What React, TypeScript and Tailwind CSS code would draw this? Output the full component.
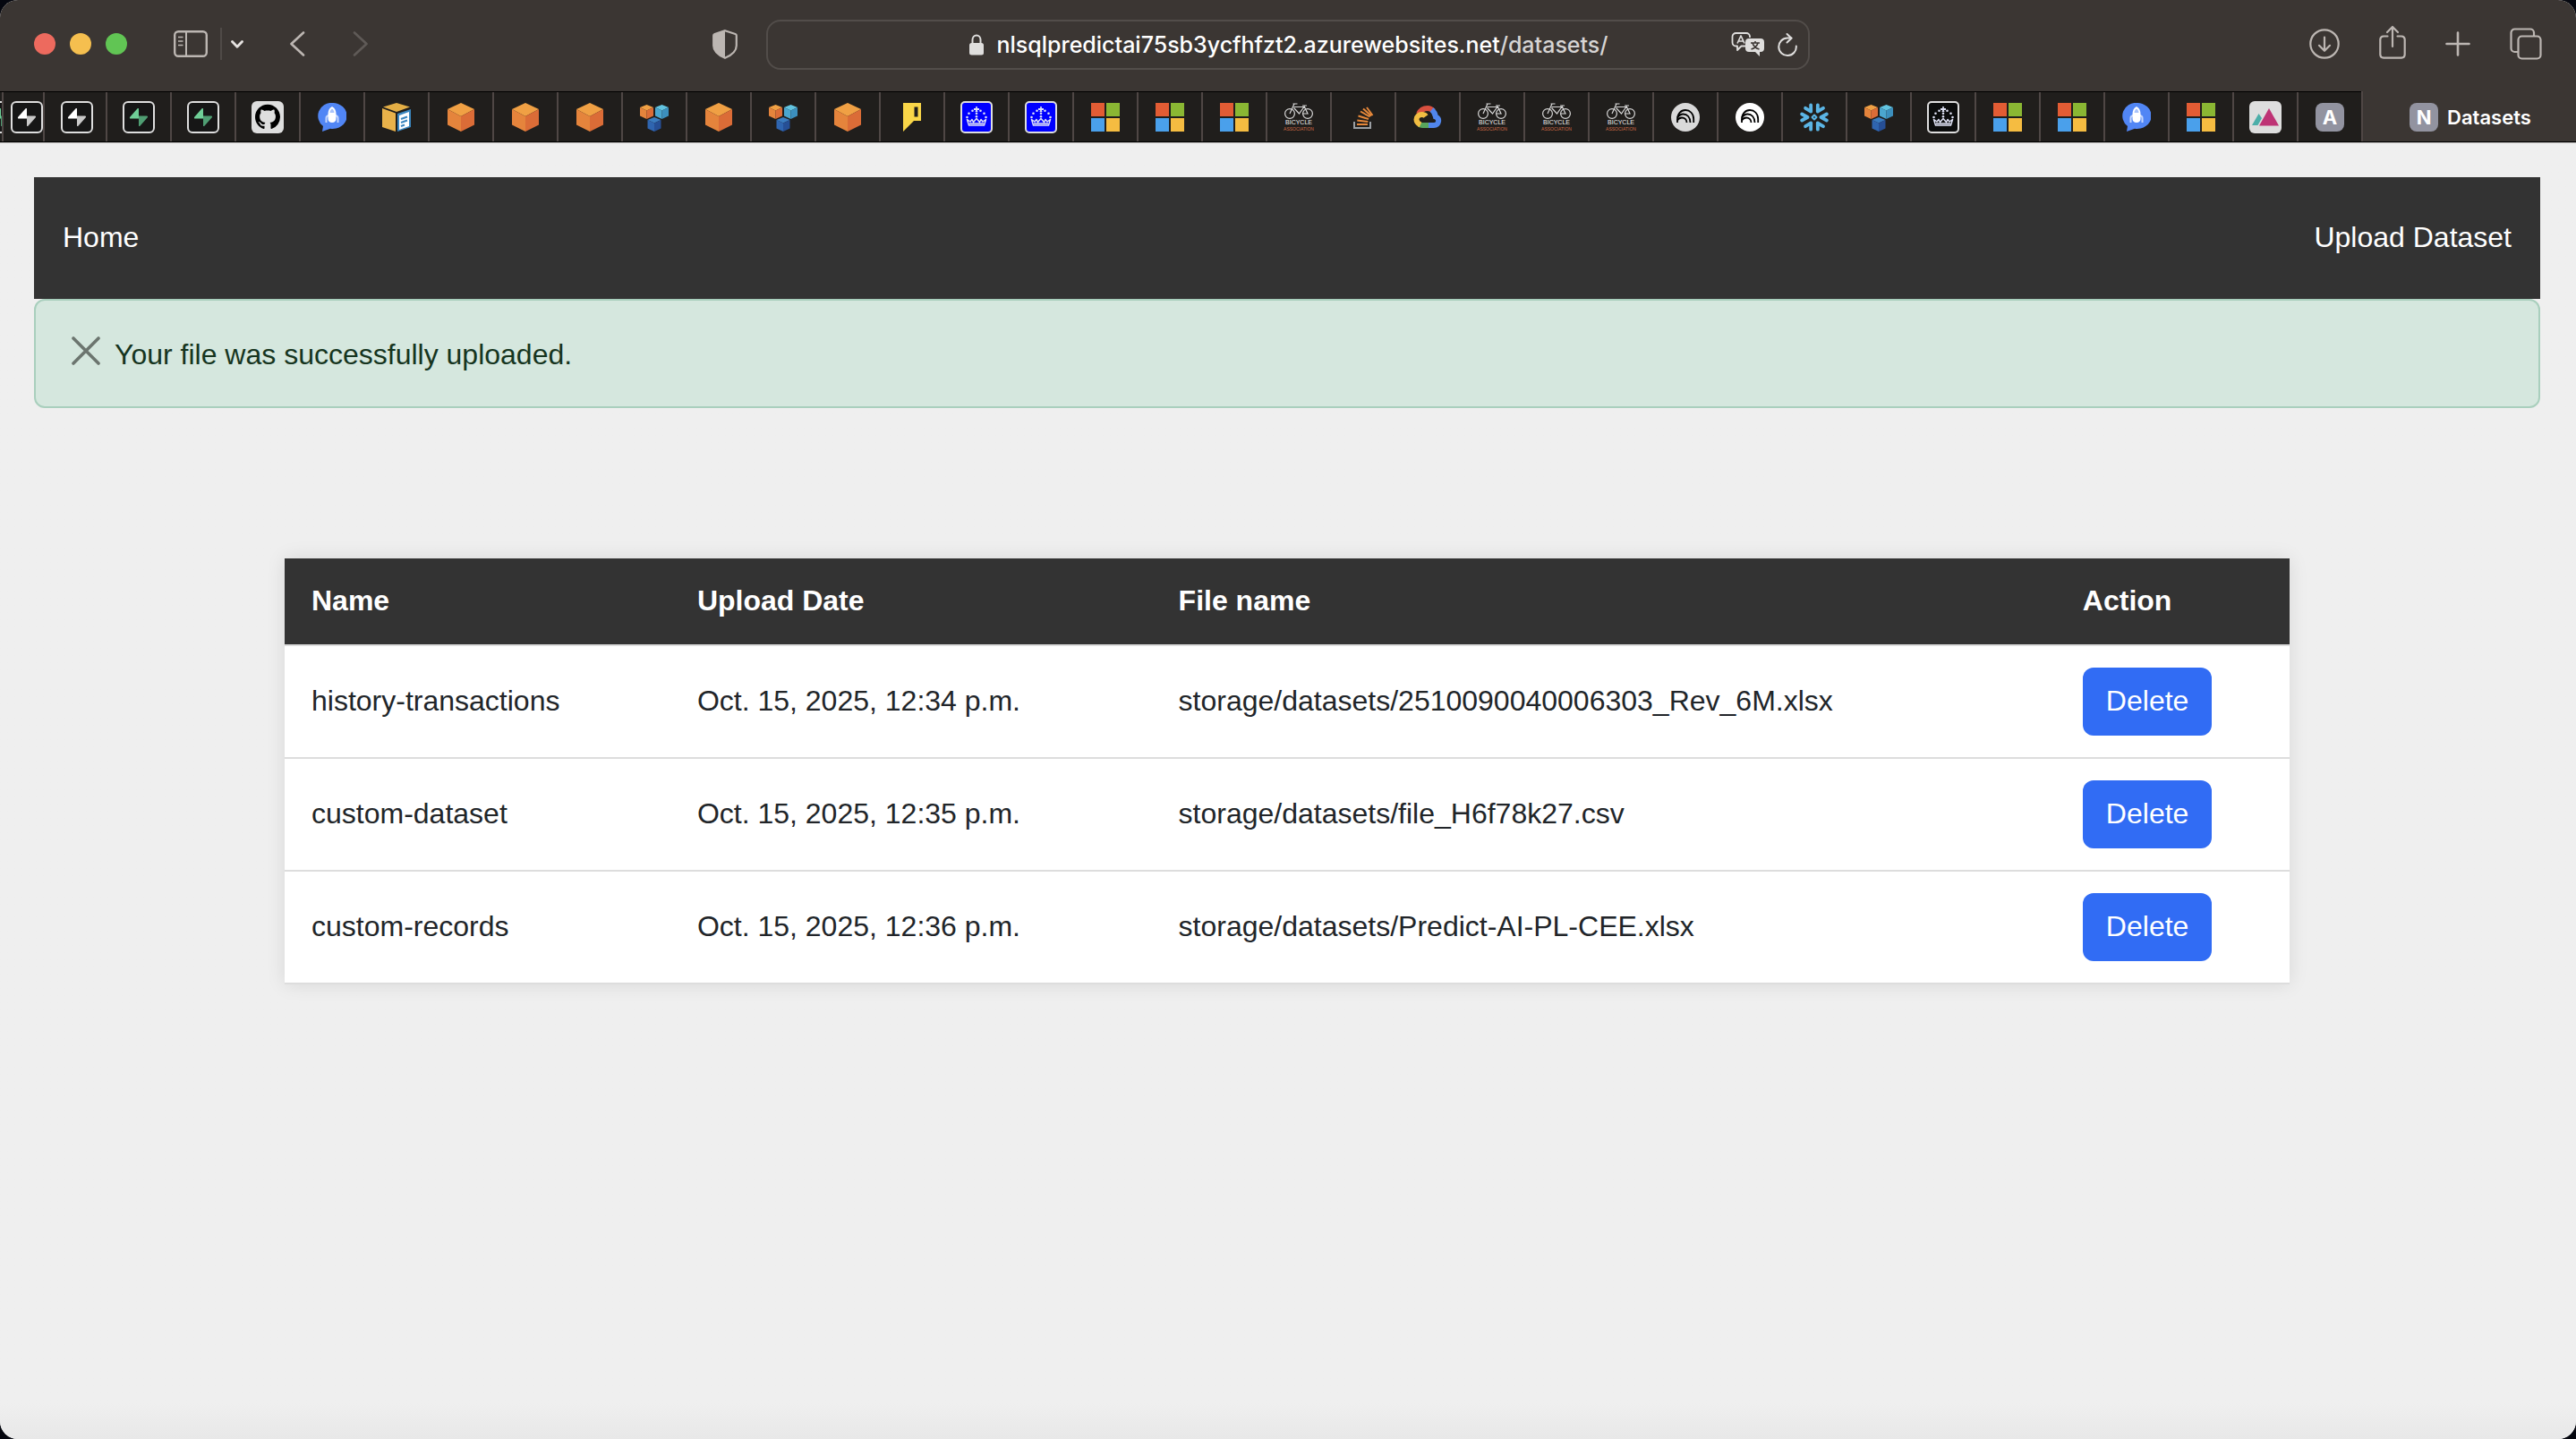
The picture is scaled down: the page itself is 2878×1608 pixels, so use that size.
import React from "react";

type P = { children?: React.ReactNode };

function Bolt({ top, bottom }: { top: string; bottom: string }) {
  return (
    <svg viewBox="0 0 36 36" className="size-9 shrink-0">
      <rect x="1" y="1" width="34" height="34" rx="5" fill="#161616" stroke="#dedede" strokeWidth="2" />
      <path d="M18 8.500v11H9c-1 0-1.400-1-.8-1.800L16.600 8.300c.5-.6 1.400-.4 1.400.200z" fill={top} />
      <path d="M18 27.500v-11h9c1 0 1.400 1 .8 1.800l-8.400 9.400c-.5.6-1.400.4-1.400-.200z" fill={bottom} />
    </svg>
  );
}
const GreenBolt = () => <Bolt top="#6fcf97" bottom="#4f9e73" />;
const WhiteBolt = () => <Bolt top="#ffffff" bottom="#c9c9c9" />;

function GitHub() {
  return (
    <svg viewBox="0 0 36 36" className="size-9">
      <rect width="36" height="36" rx="6" fill="#dedede" />
      <g transform="translate(4 3.700) scale(1.750)">
        <path
          fill="#000"
          d="M8 0C3.580 0 0 3.580 0 8c0 3.540 2.290 6.530 5.470 7.590.4.070.55-.17.55-.38 0-.19-.01-.82-.01-1.490-2.010.37-2.530-.49-2.690-.94-.09-.23-.48-.94-.82-1.130-.28-.15-.68-.52-.01-.53.63-.01 1.080.58 1.230.82.72 1.210 1.870.87 2.330.66.07-.52.28-.87.51-1.070-1.780-.2-3.640-.89-3.640-3.950 0-.87.31-1.590.82-2.150-.08-.2-.36-1.020.08-2.120 0 0 .67-.21 2.200.82.64-.18 1.320-.27 2-.27s1.360.09 2 .27c1.530-1.040 2.200-.82 2.200-.82.44 1.100.16 1.920.08 2.120.51.56.82 1.270.82 2.150 0 3.070-1.870 3.750-3.650 3.950.29.25.54.73.54 1.480 0 1.070-.01 1.930-.01 2.200 0 .21.15.46.55.38A8.010 8.010 0 0 0 16 8c0-4.420-3.580-8-8-8z"
        />
      </g>
    </svg>
  );
}

function Rocket() {
  return (
    <svg viewBox="0 0 32 32" className="size-8">
      <path d="M16 0a16 14.500 0 1 1-2 28.800L5 32l1-6A14.500 14.500 0 0 1 16 0z" fill="#5186f5" />
      <path d="M9.500 22v-5c0-1.500 1-2.500 2.500-3M22.500 22v-5c0-1.500-1-2.500-2.500-3" fill="none" stroke="#c5d6fb" strokeWidth="2" />
      <path d="M16 4c3 1.500 4.500 4.500 4.500 8.500V18c0 2-1.500 4-4.500 4s-4.500-2-4.500-4v-5.500c0-4 1.500-7 4.500-8.500z" fill="#fff" />
      <path d="M16 6.500c1.500 1 2.300 2.500 2.500 4.500h-5c.2-2 1-3.500 2.500-4.500z" fill="#a9c3fa" />
    </svg>
  );
}

function BoxDoc() {
  return (
    <svg viewBox="0 0 32 32" className="size-8">
      <path d="M16 0l15 4.500L16 10 1 4.500z" fill="#e3ae45" />
      <path d="M0 6l15 5.500V32L0 27z" fill="#e9b24a" />
      <path d="M17 12l15-5v20l-15 5z" fill="#3a86bf" />
      <path d="M19 14l11-4v16l-11 4z" fill="#fff" />
      <path d="M21 18l7-2.500M21 22l7-2.500M21 26l4-1.500" stroke="#3a86bf" strokeWidth="2" />
    </svg>
  );
}

function Cube() {
  return (
    <svg viewBox="0 0 32 32" className="size-8">
      <path d="M16 0l15 7-15 8L1 7z" fill="#f0a044" />
      <path d="M1 7l15 8v17L1 24.500z" fill="#e5843c" />
      <path d="M31 7l-15 8v17l15-7.500z" fill="#db6c37" />
    </svg>
  );
}

function MiniCube({ x, y, a, b, c }: { x: number; y: number; a: string; b: string; c: string }) {
  return (
    <g transform={`translate(${x} ${y})`}>
      <path d="M7.500 0l7.500 3-7.500 3.500L0 3z" fill={a} />
      <path d="M0 3l7.500 3.500V16L0 12.500z" fill={b} />
      <path d="M15 3L7.500 6.500V16l7.500-3.500z" fill={c} />
    </g>
  );
}
function Cubes() {
  return (
    <svg viewBox="0 0 32 32" className="size-8">
      <MiniCube x={0} y={2} a="#f0a044" b="#e5843c" c="#db6c37" />
      <MiniCube x={17} y={2} a="#62c4e0" b="#4ba6cf" c="#3c8fbd" />
      <MiniCube x={8.5} y={16} a="#3a7cc0" b="#2f65b0" c="#264f96" />
    </svg>
  );
}

function Flag() {
  return (
    <svg viewBox="0 0 32 32" className="size-8">
      <path d="M6 0h20v20h-8L6 32z" fill="#f9d648" />
      <rect x="18.500" y="4.500" width="4" height="11" fill="#201e1c" />
    </svg>
  );
}

function Crown({ bg }: { bg: string }) {
  const dots = [
    [13.5, 10.7], [22.5, 10.7], [9.5, 13.7], [26.5, 13.7], [7.5, 18], [28.5, 18], [18, 13.7], [18, 17.2],
  ];
  return (
    <svg viewBox="0 0 36 36" className="size-9">
      <rect x="1" y="1" width="34" height="34" rx="4" fill={bg} stroke="#dedede" strokeWidth="2" />
      <g fill="#dfe2f5">
        {dots.map(([x, y]) => (
          <circle key={`${x}-${y}`} cx={x} cy={y} r="1.300" />
        ))}
        <path d="M17.200 6h1.600v2H21v2h-2.200l.7 2h-3l.7-2H15V8h2.200z" />
      </g>
      <path
        d="M7.500 20.500L9.500 27h17l2-6.500-3.500 2.500-2-2.500-1.500 3-3.500-4-3.500 4-1.500-3-2 2.500zM10 25h16"
        fill="none"
        stroke="#dfe2f5"
        strokeWidth="1.500"
        strokeLinejoin="round"
      />
    </svg>
  );
}
const BlueCrown = () => <Crown bg="#0000ff" />;
const BlackCrown = () => <Crown bg="#0b0c0c" />;

function Microsoft() {
  return (
    <svg viewBox="0 0 32 32" className="size-8">
      <rect width="15" height="15" fill="#e25c34" />
      <rect x="17" width="15" height="15" fill="#8ab733" />
      <rect y="17" width="15" height="15" fill="#4aa0eb" />
      <rect x="17" y="17" width="15" height="15" fill="#f5bc41" />
    </svg>
  );
}

function Bicycle() {
  return (
    <span className="flex w-10 flex-col items-center font-['Liberation_Sans',Arial,sans-serif]">
      <svg viewBox="0 0 32 18" className="h-[18px] w-8" fill="none" stroke="#d6d6d6" strokeWidth="1.200">
        <circle cx="6" cy="12" r="5.400" />
        <circle cx="26" cy="12" r="5.400" />
        <path d="M6 12L11 1M9.500 1h5M10.500 4.500h11M10.500 5.500l6 6.500 6-8.500M20 3h5M22 3.500l4 8.500h-6" />
      </svg>
      <span className="text-[7px] leading-[8px] text-[#f0f0f0]">BICYCLE</span>
      <span className="text-[5px] leading-[6px] text-[#cf6a45]">ASSOCIATION</span>
    </span>
  );
}

function StackOverflow() {
  return (
    <svg viewBox="0 0 32 32" className="size-8">
      <path d="M6 21v7h18v-7" fill="none" stroke="#9b9fa3" strokeWidth="2" />
      <path d="M9 24h12M9.300 19.500l12 1.500M10.500 14.500l11.500 3.500M13 9.500l10.500 6M16 6.500l9 8M20 5l6.500 9" stroke="#e6883a" strokeWidth="2" />
    </svg>
  );
}

function GoogleCloud() {
  return (
    <svg viewBox="0 0 32 32" className="size-8" fill="none" strokeWidth="6">
      <path d="M6 12.500C8 8 12 6 16 6c3 0 5 1.500 6.500 3" stroke="#d9503f" />
      <path d="M20.500 7.500c3 2.500 4 5 4.500 8 2.500 1 3.500 3 3 5.500-.500 2.500-2.500 4-5 4h-7" stroke="#5186ec" />
      <path d="M17 25h-7c-1.500 0-2.500-.400-3.500-1" stroke="#58a55c" />
      <path d="M8 24.500C5 23 3.500 21 3.500 18.500c0-3.500 3-5.500 6-5.500 2 0 3.500.500 4.500 2" stroke="#f1bd42" />
    </svg>
  );
}

function Arcs({ bg }: { bg: string }) {
  return (
    <svg viewBox="0 0 32 32" className="size-8">
      <circle cx="16" cy="16" r="16" fill={bg} />
      <g fill="none" stroke="#000" strokeWidth="1.800">
        <path d="M7 22v-3.500C7 12 11 8 16 8s9.200 4 9.200 10V22" />
        <path d="M7 16.500c2-3 4-4 6.500-4 4.500 0 8 3.500 8 9.500" />
        <path d="M7 19.500c1.500-2.500 3-3 5-3 3 0 5.500 2 5.500 5.500" />
      </g>
    </svg>
  );
}
const GrayArcs = () => <Arcs bg="#d9d9d9" />;
const WhiteArcs = () => <Arcs bg="#ffffff" />;

function Snowflake() {
  return (
    <svg viewBox="0 0 32 32" className="size-8" fill="none" stroke="#5bb5e5" strokeWidth="3.800" strokeLinecap="round" strokeLinejoin="round">
      {[0, 60, 120, 180, 240, 300].map((r) => (
        <path key={r} d="M2.200 12.500L8.500 16l-6.300 3.500" transform={`rotate(${r} 16 16)`} />
      ))}
      <path d="M16 13.500l2.500 2.500-2.500 2.500-2.500-2.500z" strokeWidth="2" />
    </svg>
  );
}

function Mountains() {
  return (
    <svg viewBox="0 0 36 36" className="size-9">
      <rect width="36" height="36" rx="6" fill="#dedede" />
      <path d="M3 27l7.500-13 3.500 5-4.500 8z" fill="#4caea9" />
      <path d="M11 27.500L22 8l11 19.500z" fill="#be3375" />
    </svg>
  );
}

function Letter({ children }: P) {
  return (
    <span className="flex size-8 items-center justify-center rounded-lg bg-[#9293a0] text-[22px] leading-8 font-bold text-white">
      {children}
    </span>
  );
}
const LetterA = () => <Letter>A</Letter>;

const tabs: [string, React.ComponentType][] = [
  ["Supabase", GreenBolt], ["Supabase", GreenBolt], ["GitHub", GitHub], ["Launch", Rocket], ["Storage", BoxDoc],
  ["Instance", Cube], ["Instance", Cube], ["Instance", Cube], ["Services", Cubes], ["Instance", Cube],
  ["Services", Cubes], ["Instance", Cube], ["Notes", Flag], ["Gov", BlueCrown], ["Gov", BlueCrown],
  ["Microsoft", Microsoft], ["Microsoft", Microsoft], ["Microsoft", Microsoft], ["Bicycle Association", Bicycle],
  ["Stack Overflow", StackOverflow], ["Google Cloud", GoogleCloud], ["Bicycle Association", Bicycle],
  ["Bicycle Association", Bicycle], ["Bicycle Association", Bicycle], ["Arcs", GrayArcs], ["Arcs", WhiteArcs],
  ["Snowflake", Snowflake], ["Services", Cubes], ["Gov", BlackCrown], ["Microsoft", Microsoft],
  ["Microsoft", Microsoft], ["Launch", Rocket], ["Microsoft", Microsoft], ["Mountains", Mountains], ["A", LetterA],
];

function Toolbar() {
  return (
    <header className="flex h-[102px] items-start bg-[#3b3633] text-[#bcb6b2]">
      <div className="flex h-[98px] flex-1 items-center justify-between pr-8 pl-[38px]">
        <div className="flex items-center">
          <div className="flex gap-4">
            <button aria-label="Close" className="size-6 rounded-full bg-[#ed6a5e]" />
            <button aria-label="Minimize" className="size-6 rounded-full bg-[#f5bf4f]" />
            <button aria-label="Zoom" className="size-6 rounded-full bg-[#61c554]" />
          </div>
          <button aria-label="Sidebar" className="ml-[52px]">
            <svg viewBox="0 0 38 30" className="h-[30px] w-[38px]" fill="none" stroke="currentColor" strokeWidth="2.400">
              <rect x="1.200" y="1.200" width="35.600" height="27.600" rx="4" />
              <path d="M14 1v28" strokeWidth="2" />
              <path d="M5 7.500h5.500M5 12h5.500M5 16.500h5.500" strokeWidth="1.400" />
            </svg>
          </button>
          <span className="ml-3.5 h-9 w-0.5 bg-[#4f4a47]" />
          <button aria-label="Tab groups" className="ml-2.5 text-[#e6e3e1]">
            <svg viewBox="0 0 14 9" className="h-[9px] w-[14px]" fill="none" stroke="currentColor" strokeWidth="2.800" strokeLinecap="round" strokeLinejoin="round">
              <path d="M1.500 1.500L7 7.200l5.500-5.700" />
            </svg>
          </button>
          <button aria-label="Back" className="ml-[51px]">
            <svg viewBox="0 0 18 28" className="h-7 w-[18px]" fill="none" stroke="currentColor" strokeWidth="2.600" strokeLinecap="round" strokeLinejoin="round">
              <path d="M16 1.500L2.500 14 16 26.500" />
            </svg>
          </button>
          <button aria-label="Forward" className="ml-[53px] text-[#5f5a57]">
            <svg viewBox="0 0 18 28" className="h-7 w-[18px]" fill="none" stroke="currentColor" strokeWidth="2.600" strokeLinecap="round" strokeLinejoin="round">
              <path d="M2 1.500L15.500 14 2 26.500" />
            </svg>
          </button>
        </div>
        <button aria-label="Privacy report">
          <svg viewBox="0 0 28 33" className="h-[33px] w-7">
            <path d="M14 1.200L25.500 5c.900.300 1.300.800 1.300 1.700V18c0 6.500-5 10.500-12.800 13.800C6.200 28.500 1.200 24.500 1.200 18V6.700c0-.9.400-1.400 1.300-1.700z" fill="none" stroke="currentColor" strokeWidth="2.200" />
            <path d="M14 1L2.500 5C1.500 5.300 1 6 1 7v11c0 6.500 5 10.500 13 14z" fill="currentColor" />
          </svg>
        </button>
      </div>
      <div className="mt-[22px] flex h-14 w-[1166px] items-center rounded-2xl border-2 border-[#524d4a] pr-3">
        <div className="flex flex-1 items-center justify-center gap-3.5 pl-[88px] text-[25px] leading-8 font-medium">
          <svg viewBox="0 0 16 24" className="h-6 w-4 text-[#dfdedd]">
            <path d="M3.500 11V6.500a4.500 5 0 0 1 9 0V11" fill="none" stroke="currentColor" strokeWidth="2" />
            <rect y="10" width="16" height="13.500" rx="2.500" fill="currentColor" />
          </svg>
          <span className="text-white">
            nlsqlpredictai75sb3ycfhfzt2.azurewebsites.net<span className="text-[#d6d4d3]">/datasets/</span>
          </span>
        </div>
        <button aria-label="Translate" className="text-[#dfdedd]">
          <svg viewBox="0 0 38 28" className="h-7 w-[38px]" fill="none" stroke="currentColor" strokeWidth="1.800" strokeLinejoin="round">
            <path d="M16 15.500h-4.500L7 20v-4.500H5.500A4 4 0 0 1 1.500 11.500V5A4 4 0 0 1 5.500 1H17a4 4 0 0 1 4 4v1" />
            <path d="M7 12.500L11 4l4 8.500M8.500 10h5" strokeWidth="1.700" />
            <path d="M20 7h13a4 4 0 0 1 4 4v7a4 4 0 0 1-4 4h-1v5l-5-5h-7a4 4 0 0 1-4-4v-7a4 4 0 0 1 4-4z" fill="currentColor" stroke="none" />
            <path d="M22 12h10M27 10v2M30 12c-1 3.500-4 6-7.500 7M24 12c1 3.500 4 6 7.500 7" stroke="#3b3633" strokeWidth="1.600" />
          </svg>
        </button>
        <button aria-label="Reload" className="ml-3.5 text-[#dfdedd]">
          <svg viewBox="0 0 22 28" className="h-7 w-[22px]" fill="none" stroke="currentColor" strokeWidth="2" strokeLinecap="round" strokeLinejoin="round">
            <path d="M20.800 15.500A9.800 9.800 0 1 1 11 6.500h4.500" />
            <path d="M10.500 2l5 4.700-5 4.800" />
          </svg>
        </button>
      </div>
      <div className="flex h-[98px] flex-1 items-center justify-end gap-11 pr-[38px] pl-8">
        <button aria-label="Downloads">
          <svg viewBox="0 0 34 34" className="size-[34px]" fill="none" stroke="currentColor" strokeWidth="2.200" strokeLinecap="round" strokeLinejoin="round">
            <circle cx="17" cy="17" r="15.700" />
            <path d="M17 9.500v15M11 18.800l6 6 6-6" />
          </svg>
        </button>
        <button aria-label="Share" className="-mt-1">
          <svg viewBox="0 0 30 38" className="h-[38px] w-[30px]" fill="none" stroke="currentColor" strokeWidth="2.200" strokeLinecap="round" strokeLinejoin="round">
            <path d="M9.500 12.500H5A3.800 3.800 0 0 0 1.300 16v17A3.800 3.800 0 0 0 5 36.600h20a3.800 3.800 0 0 0 3.700-3.600V16a3.800 3.800 0 0 0-3.700-3.500h-4.500M15 24V2M9 8l6-6 6 6" />
          </svg>
        </button>
        <button aria-label="New tab">
          <svg viewBox="0 0 28 28" className="size-7" fill="none" stroke="currentColor" strokeWidth="2.600" strokeLinecap="round">
            <path d="M14 1.500v25M1.500 14h25" />
          </svg>
        </button>
        <button aria-label="Tab overview">
          <svg viewBox="0 0 36 36" className="size-9" fill="none" stroke="currentColor" strokeWidth="2.200" strokeLinejoin="round">
            <rect x="9.500" y="9.500" width="25" height="25" rx="4" />
            <path d="M9 27H5.500a4 4 0 0 1-4-4V5.500a4 4 0 0 1 4-4H23a4 4 0 0 1 4 4V9" />
          </svg>
        </button>
      </div>
    </header>
  );
}

function TabBar() {
  const cell = "flex h-14 shrink-0 items-center border-t border-black bg-[#201e1c]";
  return (
    <nav aria-label="Tabs" className="flex h-[57px] overflow-hidden border-b border-black bg-[#3b3633]">
      <div className={`${cell} w-0.5 justify-center overflow-hidden`}>
        <GreenBolt />
      </div>
      <button aria-label="Supabase" className={`${cell} w-[46px] justify-end shadow-[inset_2px_0_0_#4f4745]`}>
        <WhiteBolt />
      </button>
      <button aria-label="Supabase" className={`${cell} w-[70px] justify-center pl-1.5 shadow-[inset_2px_0_0_#4f4745]`}>
        <WhiteBolt />
      </button>
      {tabs.map(([name, Icon], i) => (
        <button key={i} aria-label={name} className={`${cell} w-[72px] justify-center pl-0.5 shadow-[inset_2px_0_0_#4f4745]`}>
          <Icon />
        </button>
      ))}
      <button className="flex h-14 flex-1 items-center justify-center gap-2.5 pt-px pl-1 text-[22px] leading-8 font-semibold text-white shadow-[inset_2px_0_0_#4f4745]">
        <Letter>N</Letter>
        Datasets
      </button>
    </nav>
  );
}

const rows = [
  ["history-transactions", "Oct. 15, 2025, 12:34 p.m.", "storage/datasets/2510090040006303_Rev_6M.xlsx"],
  ["custom-dataset", "Oct. 15, 2025, 12:35 p.m.", "storage/datasets/file_H6f78k27.csv"],
  ["custom-records", "Oct. 15, 2025, 12:36 p.m.", "storage/datasets/Predict-AI-PL-CEE.xlsx"],
];

function Page() {
  return (
    <main className="flex-1 border-t border-[#b5b3b2] bg-linear-to-t from-[#e8e8e8] to-[#efefef] to-[40px] pt-[38px] pr-10 pl-[38px] font-['Liberation_Sans',Arial,sans-serif] text-[32px] leading-[48px] text-[#212529]">
      <nav className="flex items-center justify-between bg-[#333333] px-8 pt-[43px] pb-[45px] text-white">
        <a href="#home">Home</a>
        <a href="#upload">Upload Dataset</a>
      </nav>
      <div role="alert" className="flex items-start gap-2 rounded-xl border-2 border-[#a9cfbd] bg-[#d5e7de] px-8 pt-9 pb-[34px] text-[#16351f]">
        <button aria-label="Dismiss" className="px-2 pt-1 pb-2 text-[#6c756f]">
          <svg viewBox="0 0 32 32" className="size-8" fill="none" stroke="currentColor" strokeWidth="3.600" strokeLinecap="round">
            <path d="M2 2l28 28M30 2L2 30" />
          </svg>
        </button>
        <p>Your file was successfully uploaded.</p>
      </div>
      <table className="mx-auto mt-[168px] w-4/5 border-collapse bg-white text-left shadow-[0_0_20px_rgba(0,0,0,0.1)]">
        <thead className="bg-[#333333] text-white">
          <tr>
            {["Name", "Upload Date", "File name", "Action"].map((h) => (
              <th key={h} scope="col" className="px-[30px] pt-[23px] pb-[25px] font-bold">
                {h}
              </th>
            ))}
          </tr>
        </thead>
        <tbody>
          {rows.map((r) => (
            <tr key={r[0]} className="border-y-2 border-[#dddddd]">
              {r.map((c) => (
                <td key={c} className="px-[30px] pt-[23px] pb-[25px]">
                  {c}
                </td>
              ))}
              <td className="px-[30px] py-6">
                <button className="block rounded-xl bg-[#316cf4] px-[26px] pt-[13px] pb-[15px] text-white">Delete</button>
              </td>
            </tr>
          ))}
        </tbody>
      </table>
    </main>
  );
}

export default function App() {
  return (
    <div className="min-h-screen bg-[#05070f]">
      <div className="flex min-h-screen flex-col overflow-hidden rounded-[20px] bg-[#efefef] font-['Inter',sans-serif]">
        <Toolbar />
        <TabBar />
        <Page />
      </div>
    </div>
  );
}
